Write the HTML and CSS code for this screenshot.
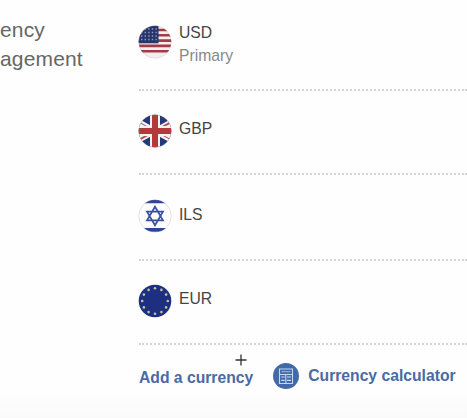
FILE: index.html
```html
<!DOCTYPE html>
<html lang="en">
<head>
  <meta charset="utf-8">
  <title>Currency management</title>
  <link rel="stylesheet" href="styles.css">
</head>
<body>
  <div class="container">
    <h2 class="section-title">ency<br>agement</h2>

    <div class="content">
      <ul class="currency-list">
        <li class="currency currency-primary">
          <svg class="flag" viewBox="0 0 34 34">
            <clipPath id="round"><circle cx="17" cy="17" r="16.3"/></clipPath>
            <g clip-path="url(#round)">
              <rect width="34" height="34" fill="#f4eeee"/>
              <path d="M0 5h34M0 10.3h34M0 15.6h34M0 20.9h34M0 26.2h34" stroke="#a03c48" stroke-width="2.6"/>
              <rect width="20.5" height="18.3" fill="#26366c"/>
              <path d="M3 4h17M3 7.5h17M3 11h17M3 14.5h17" stroke="#8d99bd" stroke-width="1.4" stroke-dasharray="1.4 2.2"/>
            </g>
            <circle cx="17" cy="17" r="16.3" fill="none" stroke="#999" stroke-opacity=".3" stroke-width=".7"/>
          </svg>
          <div class="currency-text">
            <div>USD</div>
            <div class="note">Primary</div>
          </div>
        </li>

        <li class="currency">
          <svg class="flag" viewBox="0 0 34 34">
            <g clip-path="url(#round)">
              <rect width="34" height="34" fill="#253878"/>
              <path d="M-3 6L37 28M-3 28L37 6" stroke="#f5f2f4" stroke-width="5.5"/>
              <path d="M17 17L37 6M17 17L-3 28" stroke="#b84a50" stroke-width="1.8"/>
              <path d="M17 17L-3 6M17 17L37 28" stroke="#b84a50" stroke-width="1"/>
              <path d="M17 0v34M0 17h34" stroke="#f5f2f4" stroke-width="10"/>
              <path d="M17 0v34M0 17h34" stroke="#b33a3c" stroke-width="6"/>
            </g>
            <circle cx="17" cy="17" r="16.3" fill="none" stroke="#999" stroke-opacity=".3" stroke-width=".7"/>
          </svg>
          <div class="currency-text">GBP</div>
        </li>

        <li class="currency currency-ils">
          <svg class="flag" viewBox="0 0 34 34">
            <g clip-path="url(#round)">
              <rect width="34" height="34" fill="#fdfdfe"/>
              <path d="M0 2.4h34M0 30.9h34" stroke="#2e439a" stroke-width="3.8"/>
            </g>
            <path d="M17 7.8l8 13.6H9zM17 26.2L9 12.6h16z" fill="none" stroke="#3b4fa0" stroke-width="1.7"/>
            <circle cx="17" cy="17" r="16.2" fill="none" stroke="#999" stroke-opacity=".25" stroke-width="1"/>
          </svg>
          <div class="currency-text">ILS</div>
        </li>

        <li class="currency">
          <svg class="flag" viewBox="0 0 34 34">
            <circle cx="17" cy="17" r="16.3" fill="#1c2f80"/>
            <g fill="#c3c09c">
              <circle cx="17" cy="4.2" r="1.3"/>
              <circle cx="23.4" cy="5.9" r="1.3"/>
              <circle cx="28.1" cy="10.6" r="1.3"/>
              <circle cx="29.8" cy="17" r="1.3"/>
              <circle cx="28.1" cy="23.4" r="1.3"/>
              <circle cx="23.4" cy="28.1" r="1.3"/>
              <circle cx="17" cy="29.8" r="1.3"/>
              <circle cx="10.6" cy="28.1" r="1.3"/>
              <circle cx="5.9" cy="23.4" r="1.3"/>
              <circle cx="4.2" cy="17" r="1.3"/>
              <circle cx="5.9" cy="10.6" r="1.3"/>
              <circle cx="10.6" cy="5.9" r="1.3"/>
            </g>
          </svg>
          <div class="currency-text">EUR</div>
        </li>
      </ul>

      <div class="actions">
        <a class="link add-link">Add a currency</a>
        <svg class="calc-icon" viewBox="0 0 26 26">
          <circle cx="13" cy="13" r="13" fill="#426aa9"/>
          <path d="M6.5 6h13v14.5h-13zM6.5 11.5h13M8.3 14h3.4M14 14h4M8.3 17.4h3.4M14 17.4h4M12.8 11.5v9" fill="none" stroke="#c5d8f3" stroke-width="1.1"/>
          <path d="M8.5 8.7h9" stroke="#9dbbe5" stroke-width="1"/>
        </svg>
        <a class="link">Currency calculator</a>
      </div>
    </div>
  </div>

  <!-- crosshair pointer -->
  <svg class="pointer" viewBox="0 0 12 12">
    <path d="M6 .5v11M.5 6h11" stroke="#333" stroke-width="1.3"/>
  </svg>
</body>
</html>
```
FILE: styles.css
```css
body {
  margin: 0;
  height: 418px;
  overflow: hidden;
  background: linear-gradient(#fefefe 390px, #fafafa 418px);
  font-family: "Liberation Sans", Arial, sans-serif;
  color: #444;
}

.container {
  display: grid;
  grid-template-columns: 138px 1fr;
}

.section-title {
  margin: 0;
  padding-top: 15px;
  font-size: 21px;
  font-weight: normal;
  line-height: 29px;
  letter-spacing: 0.15px;
  color: #666;
}

.currency-list {
  margin: 0;
  padding: 0;
  list-style: none;
}

.currency {
  display: flex;
  box-sizing: border-box;
  height: 84px;
  margin-left: 1px;
  border-bottom: 2px dotted #d5d5d5;
}

.currency-primary {
  height: 91px;
}

.currency-ils {
  height: 86px;
}

.flag {
  width: 34px;
  height: 34px;
  margin: 23px 7px 0 -1px;
}

.currency-primary .flag {
  margin-top: 25px;
}

.currency-ils .flag {
  margin-top: 24px;
}

.currency-text {
  padding-top: 26px;
  font-size: 15.7px;
  line-height: 23px;
}

.currency-primary .currency-text {
  padding-top: 21px;
}

.currency-ils .currency-text {
  padding-top: 28px;
}

.note {
  color: #888;
}

.actions {
  display: flex;
  align-items: center;
  padding: 15px 0 0 1px;
}

.link {
  font-size: 15.7px;
  font-weight: bold;
  line-height: 26px;
  color: #4a6aa5;
  white-space: nowrap;
}

.add-link {
  padding-top: 5px;
}

.calc-icon {
  width: 26px;
  height: 26px;
  margin: 0 9px 0 20px;
}

.pointer {
  position: absolute;
  left: 235px;
  top: 354px;
  width: 12px;
  height: 12px;
}
```
